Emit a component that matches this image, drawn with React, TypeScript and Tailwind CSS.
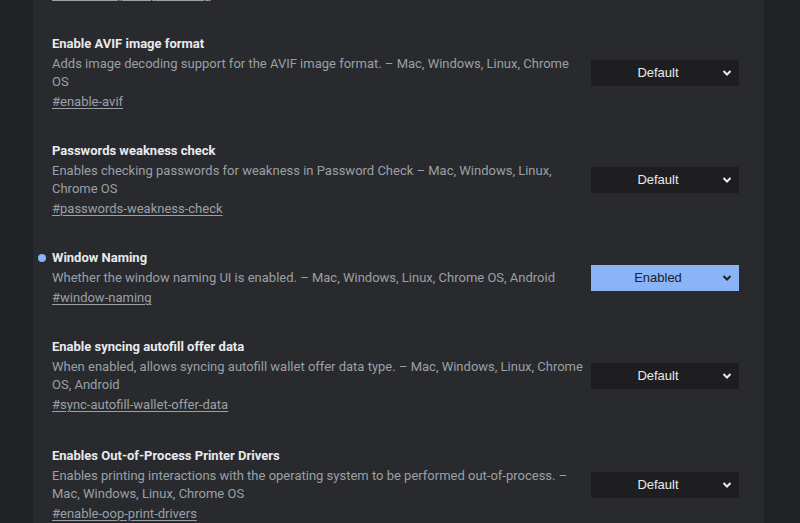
import React from "react";

interface Flag {
  name: string;
  desc: string;
  id: string;
  value: "Default" | "Enabled";
}

const FLAGS: Flag[] = [
  {
    name: "Enable AVIF image format",
    desc: "Adds image decoding support for the AVIF image format. – Mac, Windows, Linux, Chrome OS",
    id: "enable-avif",
    value: "Default",
  },
  {
    name: "Passwords weakness check",
    desc: "Enables checking passwords for weakness in Password Check – Mac, Windows, Linux, Chrome OS",
    id: "passwords-weakness-check",
    value: "Default",
  },
  {
    name: "Window Naming",
    desc: "Whether the window naming UI is enabled. – Mac, Windows, Linux, Chrome OS, Android",
    id: "window-naming",
    value: "Enabled",
  },
  {
    name: "Enable syncing autofill offer data",
    desc: "When enabled, allows syncing autofill wallet offer data type. – Mac, Windows, Linux, Chrome OS, Android",
    id: "sync-autofill-wallet-offer-data",
    value: "Default",
  },
  {
    name: "Enables Out-of-Process Printer Drivers",
    desc: "Enables printing interactions with the operating system to be performed out-of-process. – Mac, Windows, Linux, Chrome OS",
    id: "enable-oop-print-drivers",
    value: "Default",
  },
];

function Chevron({ dark }: { dark: boolean }) {
  return (
    <svg width="10" height="7" viewBox="0 0 10 7" className="absolute right-[7px] top-1/2 -translate-y-1/2">
      <polyline
        points="1.5,1.5 5,5 8.5,1.5"
        fill="none"
        stroke={dark ? "#202124" : "#e8eaed"}
        strokeWidth="2"
      />
    </svg>
  );
}

function FlagSelect({ value }: { value: Flag["value"] }) {
  const on = value === "Enabled";
  return (
    <div
      className={`relative w-[148px] h-[26px] shrink-0 flex items-center justify-center pl-2 pr-[22px] text-[13px] ${
        on ? "bg-[#8ab4f8] text-[#202124]" : "bg-[#1e1e20] text-[#e8eaed]"
      }`}
      style={{ fontFamily: "'Liberation Sans', Arial, sans-serif" }}
    >
      {value}
      <Chevron dark={on} />
    </div>
  );
}

function FlagRow({ flag, last }: { flag: Flag; last?: boolean }) {
  const on = flag.value === "Enabled";
  return (
    <div className={`flex items-center justify-between pt-[15px] ${last ? "pb-[16px]" : "pb-[14px]"}`}>
      <div className="w-[534px]">
        <div className="relative h-5 leading-5 text-[13px] font-bold text-[#e8eaed] mb-px">
          {on && <span className="absolute -left-[14px] top-[6px] w-2 h-2 rounded-full bg-[#8ab4f8]" />}
          {flag.name}
        </div>
        <div className="text-[13px] leading-[18px] text-[#9aa0a6]">{flag.desc}</div>
        <div className="mt-px h-5 leading-5 text-[13px] text-[#9aa0a6] underline underline-offset-2">#{flag.id}</div>
      </div>
      <FlagSelect value={flag.value} />
    </div>
  );
}

export default function App() {
  return (
    <div
      className="w-[800px] h-[523px] overflow-hidden flex bg-[#202124]"
      style={{ fontFamily: "Roboto, 'Noto Sans', sans-serif" }}
    >
      <div className="w-[33px] shrink-0" />
      <div className="w-[731px] shrink-0 bg-[#292a2d] pl-[19px] pr-[25px]">
        {/* tail of the previous flag, scrolled mostly out of view */}
        <div className="-mt-[16px] pb-[15px]">
          <div className="h-5 leading-5 text-[13px] text-[#9aa0a6] underline underline-offset-2">
            #enable-lazy-image-loading
          </div>
        </div>
        {FLAGS.map((f, i) => (
          <FlagRow key={f.id} flag={f} last={i === 3} />
        ))}
      </div>
      <div className="flex-1" />
    </div>
  );
}
